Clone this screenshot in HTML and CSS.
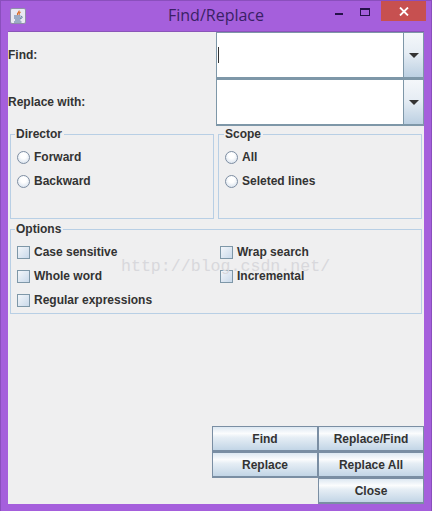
FILE: index.html
```
<!DOCTYPE html>
<html lang="en">
<head>
<meta charset="utf-8">
<title>Find/Replace</title>
<link rel="stylesheet" href="styles.css">
</head>
<body>
<div class="window">
  <header class="titlebar">
    <svg class="app-icon" width="16" height="16" viewBox="0 0 16 16">
      <rect x="0.5" y="0.5" width="15" height="15" rx="1.5" fill="#e8e9f2" stroke="#8f8fa8"/>
      <path d="M9 2.500c1 1.500-2.500 2.500-1.500 4.500M10.500 4c-1.500 1-2 2-1 3" fill="none" stroke="#d8641c" stroke-width="1.100"/>
      <path d="M4 8h6.500M4 10h7M5 12h5.500M4 14h7.500" stroke="#4f6f96" stroke-width="1"/>
      <path d="M11 8.500c1.500-.5 2 1.500-.5 2" fill="none" stroke="#4f6f96"/>
    </svg>
    <h1 class="title">Find/Replace</h1>
    <div class="controls">
      <svg class="ctl" width="28" height="20" viewBox="0 0 28 20"><rect x="8" y="12" width="8" height="2" fill="#25124a"/></svg>
      <svg class="ctl" width="26" height="20" viewBox="0 0 26 20"><rect x="5.500" y="7.500" width="9" height="7" fill="none" stroke="#25124a"/><rect x="5" y="7" width="10" height="2" fill="#25124a"/></svg>
      <div class="close"><svg width="10" height="9" viewBox="0 0 10 9"><path d="M1 .5l8 8M9 .5l-8 8" stroke="#fff" stroke-width="1.800"/></svg></div>
    </div>
  </header>
  <main class="content">
    <section class="inputs">
      <label class="row-label">Find:</label>
      <div class="combo">
        <div class="field"><span class="caret"></span></div>
        <div class="arrow"><span class="tri"></span></div>
      </div>
      <label class="row-label">Replace with:</label>
      <div class="combo">
        <div class="field"></div>
        <div class="arrow"><span class="tri"></span></div>
      </div>
    </section>
    <section class="panels">
      <fieldset class="panel">
        <legend>Director</legend>
        <div class="opt"><span class="radio"></span>Forward</div>
        <div class="opt"><span class="radio"></span>Backward</div>
      </fieldset>
      <fieldset class="panel">
        <legend>Scope</legend>
        <div class="opt"><span class="radio"></span>All</div>
        <div class="opt"><span class="radio"></span>Seleted lines</div>
      </fieldset>
    </section>
    <fieldset class="panel options">
      <legend>Options</legend>
      <div class="opt-grid">
        <div class="opt"><span class="check"></span>Case sensitive</div>
        <div class="opt"><span class="check"></span>Wrap search</div>
        <div class="opt"><span class="check"></span>Whole word</div>
        <div class="opt"><span class="check"></span>Incremental</div>
        <div class="opt"><span class="check"></span>Regular expressions</div>
      </div>
    </fieldset>
    <section class="buttons">
      <button class="btn">Find</button>
      <button class="btn">Replace/Find</button>
      <button class="btn">Replace</button>
      <button class="btn">Replace All</button>
      <button class="btn third">Close</button>
    </section>
  </main>
  <div class="watermark">http://blog.csdn.net/</div>
</div>
</body>
</html>
```
FILE: styles.css
```
* { box-sizing: border-box; }
html, body { margin: 0; padding: 0; }
body { width: 432px; height: 511px; overflow: hidden; font-family: "Liberation Sans", Arial, sans-serif; }
.window {
  position: relative;
  width: 432px;
  height: 511px;
  background: #a55fdc;
  border: 1px solid #8a4fbd;
  border-bottom-width: 0;
  display: flex;
  flex-direction: column;
}
.titlebar { height: 30px; flex: none; display: flex; align-items: flex-start; position: relative; }
.app-icon { margin: 7px 0 0 9px; flex: none; }
.title {
  margin: 0;
  position: absolute;
  left: 0; right: 0; top: 4px;
  text-align: center;
  font: normal 16px/20px "Open Sans", "Noto Sans", sans-serif;
  color: #3a1f66;
}
.controls { margin-left: auto; display: flex; align-items: flex-start; position: relative; padding-right: 5px; }
.ctl { display: block; }
.close {
  width: 45px; height: 20px;
  background: #c75050;
  display: flex; align-items: center; justify-content: center;
}
.content {
  width: 416px;
  height: 473px;
  margin-left: 7px;
  background: #efeff0;
  border-top: 1px solid #8a55b8;
  display: flex;
  flex-direction: column;
  font-size: 12px;
  font-weight: bold;
  color: #333;
}
.inputs {
  display: grid;
  grid-template-columns: 208px 208px;
  grid-auto-rows: 47px;
  align-items: stretch;
}
.row-label { align-self: center; line-height: 14px; margin-top: -2px; }
.combo { display: flex; border: 1px solid #7e97a8; border-bottom-width: 2px; }
.field { flex: 1; background: #fff; position: relative; border-right: 1px solid #7e97a8; }
.caret { position: absolute; left: 1px; top: 14px; width: 1px; height: 16px; background: #333; }
.arrow {
  width: 19px;
  background: linear-gradient(#f4f7fa, #e6edf4 45%, #bcd0e2);
  display: flex; align-items: center; justify-content: center;
}
.tri { width: 0; height: 0; border: 5px solid transparent; border-top-color: #333; border-bottom-width: 0; }
.panels {
  display: grid;
  grid-template-columns: 204px 204px;
  gap: 4px;
  padding: 0 2px;
  margin-top: 1px;
}
.panel {
  margin: 0;
  padding: 0 0 0 6px;
  height: 92px;
  min-width: 0;
  border: 1px solid #b8cfe5;
}
.panel legend { padding: 0 2px 0 1px; margin-left: -2px; font-size: 12px; line-height: 14px; }
.panel:nth-child(2) legend { margin-left: -1px; }
.options { margin: 3px 2px 0; height: 92px; }
.opt { height: 24px; display: flex; align-items: center; gap: 4px; line-height: 14px; white-space: nowrap; }
.panel > .opt:first-of-type { margin-top: 4px; }
.radio {
  width: 13px; height: 13px; border-radius: 50%; flex: none;
  border: 1px solid #7e8ea2;
  background: radial-gradient(circle at 50% 35%, #fff 30%, #cfdbe9);
}
.check {
  width: 13px; height: 13px; flex: none;
  border: 1px solid #7e97a8;
  background: linear-gradient(135deg, #f3f6fa, #c9d9ea);
}
.opt-grid { display: grid; grid-template-columns: 203px 1fr; margin-top: 4px; }
.buttons {
  margin-top: auto;
  display: grid;
  grid-template-columns: 106px 106px;
  grid-auto-rows: 26px;
  justify-content: end;
}
.btn {
  font: inherit;
  color: inherit;
  padding: 0;
  border: 1px solid #7a8ea3;
  border-bottom-width: 2px;
  background: linear-gradient(#dde8f2, #fbfcfd 28%, #e6eef5 45%, #c2d5e6);
}
.third { grid-column: 2; }
.watermark {
  position: absolute;
  left: 120px; top: 257px;
  font: 16.600px/18px "Liberation Mono", monospace;
  color: #d8d8dc;
  pointer-events: none;
}
```
